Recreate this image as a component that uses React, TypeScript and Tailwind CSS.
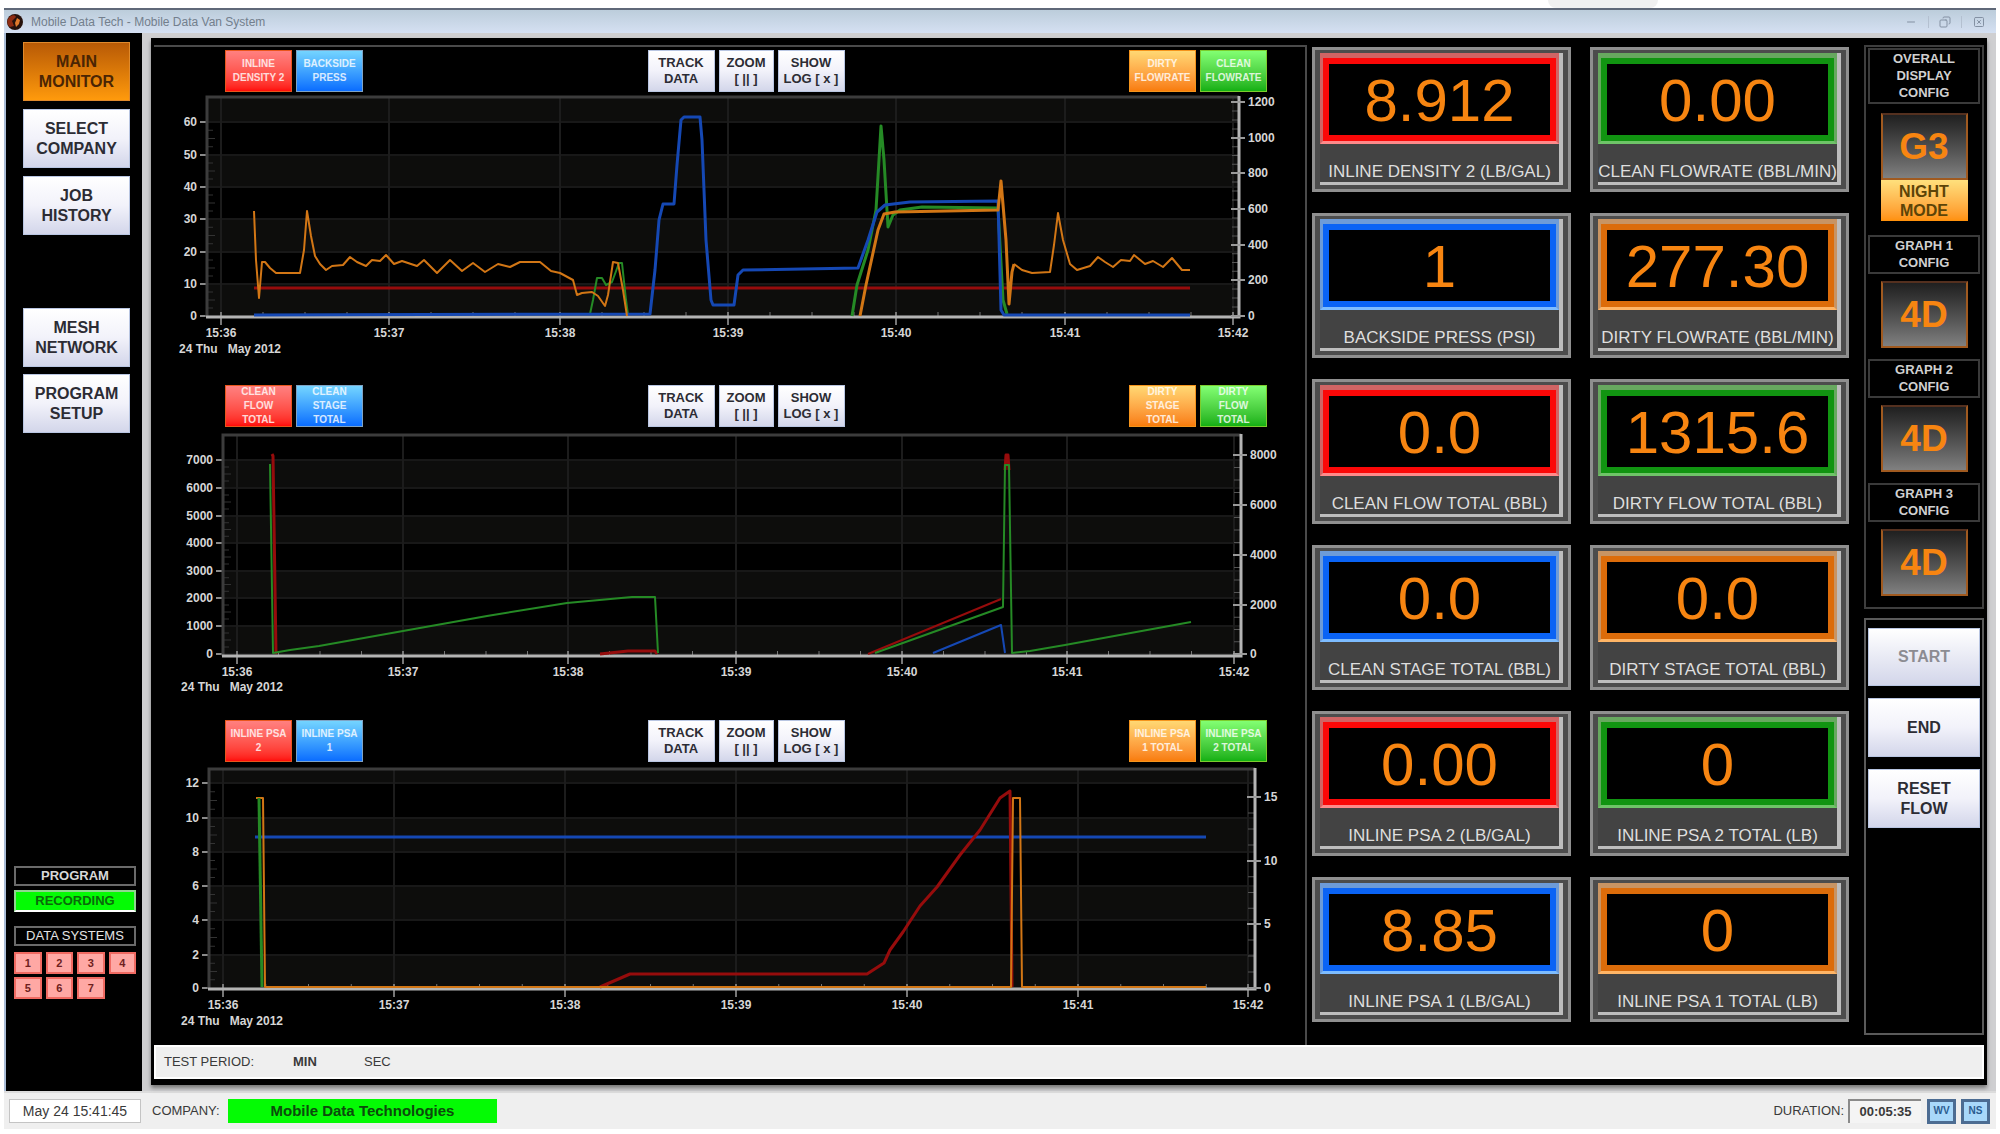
import { Copy, Minus, SquareX } from "lucide-react";

type Color = "red" | "blue" | "green" | "orange";

const lineColor: Record<Color, string> = {
  red: "#960c0c",
  blue: "#1548b4",
  green: "#258a25",
  orange: "#d27615",
};

const legendColor: Record<Color, string> = {
  red: "from-[#ff8080] to-[#ff0808] border-[#e8561c]",
  blue: "from-[#74d4ff] to-[#0a6cff] border-[#7fa3c4]",
  orange: "from-[#ffd873] to-[#f87c08] border-[#f5941c]",
  green: "from-[#82ff72] to-[#12b012] border-[#7ccc2e]",
};

const frameTint: Record<Color, string> = {
  red: "border-[#d06464] border-b-[#ff8a8a]",
  blue: "border-[#6d9bd8] border-b-[#7dbcff]",
  orange: "border-[#c89463] border-b-[#ffb566]",
  green: "border-[#67a85f] border-b-[#6fc468]",
};

const frameColor: Record<Color, string> = {
  red: "border-[#fb0808]",
  blue: "border-[#0a63f5]",
  orange: "border-[#dc6c0a]",
  green: "border-[#119411]",
};

type Tick = [string, number];

type ChartData = {
  top: number;
  plot: { x1: number; x2: number; y1: number; y2: number };
  left: Tick[];
  right: Tick[];
  time: number[];
  bands: [number, number][];
  date: [number, number];
  legend: [string, Color][];
  series: { color: Color; width: number; points: string }[];
};

const charts: ChartData[] = [
  {
    top: 92,
    plot: { x1: 207, x2: 1239, y1: 97, y2: 317 },
    left: [["60", 122], ["50", 155], ["40", 187], ["30", 219], ["20", 252], ["10", 284], ["0", 316]],
    right: [["1200", 102], ["1000", 138], ["800", 173], ["600", 209], ["400", 245], ["200", 280], ["0", 316]],
    time: [221, 389, 560, 728, 896, 1065, 1233],
    bands: [[97, 122], [155, 187], [219, 252], [284, 316]],
    date: [179, 349],
    legend: [["INLINE\nDENSITY 2", "red"], ["BACKSIDE\nPRESS", "blue"], ["DIRTY\nFLOWRATE", "orange"], ["CLEAN\nFLOWRATE", "green"]],
    series: [
      { color: "red", width: 3, points: "254,288 1190,288" },
      {
        color: "green",
        width: 2,
        points: "590,314 593,300 597,278 602,278 606,285 612,282 619,263 622,263 626,300 628,315",
      },
      {
        color: "green",
        width: 3,
        points:
          "852,316 857,285 868,250 876,210 881,126 884,160 888,227 893,215 900,210 922,207 998,208 1003,300 1007,314",
      },
      {
        color: "blue",
        width: 3,
        points:
          "254,315 650,314 655,270 659,220 663,204 674,204 677,165 681,120 684,117 700,117 702,140 706,240 711,300 713,305 734,305 738,275 743,270 858,268 868,240 877,212 885,205 910,202 998,201 1001,310 1004,315 1190,315",
      },
      {
        color: "orange",
        width: 2,
        points:
          "254,211 256,260 259,298 262,262 265,262 270,268 276,273 300,273 304,250 307,211 311,236 315,256 320,264 326,270 332,266 343,265 350,257 357,262 366,266 372,260 380,261 386,255 394,264 402,261 417,266 424,260 437,273 450,260 462,271 473,263 485,272 498,264 510,267 520,262 540,262 551,271 560,273 573,280 577,295 582,293 592,292 598,296 605,306 608,295 613,262 618,263 623,290 627,316",
      },
      {
        color: "orange",
        width: 3,
        points:
          "860,316 866,285 878,230 884,214 895,212 998,210 1001,181 1006,240 1009,304 1012,272 1014,264",
      },
      {
        color: "orange",
        width: 2,
        points:
          "1014,264 1022,270 1032,273 1050,272 1054,245 1058,213 1063,240 1070,264 1077,270 1090,266 1098,257 1105,262 1113,267 1121,260 1130,261 1134,255 1145,264 1153,261 1163,267 1172,258 1182,270 1190,270",
      },
    ],
  },
  {
    top: 427,
    plot: { x1: 223, x2: 1241, y1: 435, y2: 656 },
    left: [["7000", 460], ["6000", 488], ["5000", 516], ["4000", 543], ["3000", 571], ["2000", 598], ["1000", 626], ["0", 654]],
    right: [["8000", 455], ["6000", 505], ["4000", 555], ["2000", 605], ["0", 654]],
    time: [237, 403, 568, 736, 902, 1067, 1234],
    bands: [[460, 488], [516, 543], [571, 598], [626, 654]],
    date: [181, 687],
    legend: [["CLEAN\nFLOW\nTOTAL", "red"], ["CLEAN\nSTAGE\nTOTAL", "blue"], ["DIRTY\nSTAGE\nTOTAL", "orange"], ["DIRTY\nFLOW\nTOTAL", "green"]],
    series: [
      { color: "red", width: 3, points: "272,454 273,456 276,654" },
      { color: "red", width: 3, points: "600,654 628,651 655,651 657,654" },
      { color: "red", width: 2, points: "868,654 1001,599" },
      { color: "red", width: 3, points: "1005,470 1006,455 1008,455 1009,470" },
      { color: "blue", width: 2, points: "933,653 1001,625 1005,653" },
      { color: "green", width: 2, points: "270,464 273,653 290,650 319,646 403,631 487,616 567,603 632,597 655,597 658,653" },
      { color: "green", width: 2, points: "875,653 1003,607 1005,465 1009,465 1012,653 1030,651 1065,645 1191,622" },
    ],
  },
  {
    top: 762,
    plot: { x1: 209, x2: 1255, y1: 769, y2: 989 },
    left: [["12", 783], ["10", 818], ["8", 852], ["6", 886], ["4", 920], ["2", 955], ["0", 988]],
    right: [["15", 797], ["10", 861], ["5", 924], ["0", 988]],
    time: [223, 394, 565, 736, 907, 1078, 1248],
    bands: [[769, 783], [818, 852], [886, 920], [955, 988]],
    date: [181, 1021],
    legend: [["INLINE PSA\n2", "red"], ["INLINE PSA\n1", "blue"], ["INLINE PSA\n1 TOTAL", "orange"], ["INLINE PSA\n2 TOTAL", "green"]],
    series: [
      { color: "blue", width: 3, points: "255,837 1206,837" },
      {
        color: "red",
        width: 3,
        points:
          "600,987 630,974 867,974 884,963 890,950 903,932 920,906 937,887 960,855 980,830 1000,798 1010,791 1012,987",
      },
      { color: "orange", width: 2, points: "256,798 263,798 265,987 1011,987 1013,798 1020,798 1022,987 1206,987" },
      { color: "green", width: 3, points: "259,798 262,987" },
    ],
  },
];

const gauges: { label: string; value: string; color: Color }[] = [
  { label: "INLINE DENSITY 2 (LB/GAL)", value: "8.912", color: "red" },
  { label: "CLEAN FLOWRATE (BBL/MIN)", value: "0.00", color: "green" },
  { label: "BACKSIDE PRESS (PSI)", value: "1", color: "blue" },
  { label: "DIRTY FLOWRATE (BBL/MIN)", value: "277.30", color: "orange" },
  { label: "CLEAN FLOW TOTAL (BBL)", value: "0.0", color: "red" },
  { label: "DIRTY FLOW TOTAL (BBL)", value: "1315.6", color: "green" },
  { label: "CLEAN STAGE TOTAL (BBL)", value: "0.0", color: "blue" },
  { label: "DIRTY STAGE TOTAL (BBL)", value: "0.0", color: "orange" },
  { label: "INLINE PSA 2 (LB/GAL)", value: "0.00", color: "red" },
  { label: "INLINE PSA 2 TOTAL (LB)", value: "0", color: "green" },
  { label: "INLINE PSA 1 (LB/GAL)", value: "8.85", color: "blue" },
  { label: "INLINE PSA 1 TOTAL (LB)", value: "0", color: "orange" },
];

const silver = "bg-gradient-to-b from-white via-[#f2f2fa] to-[#d3d6ea] border border-[#b9c6e2] font-bold text-[#2c2c34]";

function LegendButton({ label, color }: { label: string; color: Color }) {
  return (
    <button
      className={`flex h-[42px] w-[67px] items-center justify-center overflow-hidden whitespace-pre border bg-gradient-to-b text-center text-[10px] font-bold leading-[14px] text-white/80 ${legendColor[color]}`}
    >
      {label}
    </button>
  );
}

function Chart({ data }: { data: ChartData }) {
  const { x1, x2, y1, y2 } = data.plot;
  const step = (data.time[1] - data.time[0]) / 4;
  const minor = data.time.slice(0, 6).flatMap((t) => [t + step, t + step * 2, t + step * 3]);

  return (
    <svg viewBox={`154 ${data.top} 1151 278`} className="block h-auto w-full text-[12px] font-bold" fill="#d6d6d6">
      {data.bands.map(([a, b]) => (
        <rect key={a} x={x1} y={a} width={x2 - x1} height={b - a} fill="#0d0d0c" />
      ))}
      {data.left.map(([label, y]) => (
        <g key={label}>
          <path d={`M${x1} ${y}H${x2}`} stroke="#181818" strokeWidth="2" />
          <path d={`M${x1 - 7} ${y}h7`} stroke="#8a8a8a" strokeWidth="2" />
          <text x={x1 - 10} y={y + 4} textAnchor="end">
            {label}
          </text>
        </g>
      ))}
      {data.time.map((x, i) => (
        <g key={x}>
          <path d={`M${x} ${y1}V${y2}`} stroke="#1c1c1c" strokeWidth="2" />
          <path d={`M${x} ${y2 - 5}v13`} stroke="#777" strokeWidth="2" />
          <text x={x} y={y2 + 20} textAnchor="middle">
            {`15:${36 + i}`}
          </text>
        </g>
      ))}
      {minor.map((x) => (
        <path key={x} d={`M${x} ${y2 - 5}v5`} stroke="#777" strokeWidth="1" />
      ))}
      {data.left.slice(1).map(([label, y], i) => {
        const gap = (y - data.left[i][1]) / 4;
        return <path key={label} d={`M${x1} ${y - gap}h6M${x1} ${y - gap * 2}h8M${x1} ${y - gap * 3}h6`} stroke="#333" />;
      })}
      {data.right.slice(1).map(([label, y], i) => {
        const gap = (y - data.right[i][1]) / 4;
        return <path key={label} d={`M${x2 - 7} ${y - gap}h6M${x2 - 7} ${y - gap * 2}h6M${x2 - 7} ${y - gap * 3}h6`} stroke="#555" />;
      })}
      <path d={`M${x1} ${y2}V${y1}H${x2}`} fill="none" stroke="#3c3c3c" strokeWidth="3" />
      <path d={`M${x1 - 1} ${y2}H${x2}V${y1 - 1}`} fill="none" stroke="#b4b4b4" strokeWidth="3" />
      {data.right.map(([label, y]) => (
        <g key={label}>
          <path d={`M${x2 - 8} ${y}h14`} stroke="#9a9a9a" strokeWidth="2" />
          <text x={x2 + 9} y={y + 4}>
            {label}
          </text>
        </g>
      ))}
      {data.series.map((s) => (
        <polyline
          key={s.points}
          points={s.points}
          fill="none"
          stroke={lineColor[s.color]}
          strokeWidth={s.width}
          strokeLinejoin="round"
        />
      ))}
      <text x={data.date[0]} y={data.date[1] + 4} xmlSpace="preserve">
        {"24 Thu   May 2012"}
      </text>
    </svg>
  );
}

function ChartSection({ data }: { data: ChartData }) {
  return (
    <section>
      <div className="flex justify-between pl-[71px] pr-[38px]">
        <div className="flex gap-[4px]">
          {data.legend.slice(0, 2).map(([label, color]) => (
            <LegendButton key={label} label={label} color={color} />
          ))}
        </div>
        <div className="flex gap-[4px] text-[13px] leading-[16px]">
          <button className={`w-[67px] ${silver}`}>
            TRACK
            <br />
            DATA
          </button>
          <button className={`w-[55px] ${silver}`}>
            ZOOM
            <br />[ || ]
          </button>
          <button className={`w-[67px] whitespace-nowrap ${silver}`}>
            SHOW
            <br />
            LOG [ x ]
          </button>
        </div>
        <div className="flex gap-[4px]">
          {data.legend.slice(2).map(([label, color]) => (
            <LegendButton key={label} label={label} color={color} />
          ))}
        </div>
      </div>
      <Chart data={data} />
    </section>
  );
}

function Gauge({ label, value, color }: { label: string; value: string; color: Color }) {
  return (
    <div className="border-[3px] border-[#8f8f8f] bg-[#4c4c4c] px-[5px] pb-[4px] pt-[3px]">
      <div className="border-b-[3px] border-r-[4px] border-[#bdbdbd] bg-[#434343]">
        <div className={`border-x-[3px] border-b-[3px] border-t-[5px] ${frameTint[color]}`}>
          <div
            className={`flex h-[83px] items-center justify-center border-[6px] bg-black pt-[2px] text-[60px] leading-none text-[#f78511] ${frameColor[color]}`}
          >
            {value}
          </div>
        </div>
        <div className="flex h-[38px] items-end justify-center whitespace-nowrap text-[17px] leading-[20px] text-[#dedede]">
          {label}
        </div>
      </div>
    </div>
  );
}

function ConfigHeading({ lines }: { lines: string[] }) {
  return (
    <h2 className="w-full border-2 border-[#3a3a3a] pb-[1px] text-center text-[13px] font-bold leading-[17px] text-[#d0d0d0]">
      {lines.map((line) => (
        <span key={line} className="block">
          {line}
        </span>
      ))}
    </h2>
  );
}

function ConfigButton({ label }: { label: string }) {
  return (
    <button className="block h-[67px] w-[87px] border-2 border-[#a05a20] border-t-[#54301f] bg-gradient-to-b from-[#202020] to-[#808080] text-[37px] font-bold leading-none text-[#f78511]">
      {label}
    </button>
  );
}

function SideButton({ children, active }: { children: React.ReactNode; active?: boolean }) {
  return (
    <button
      className={`h-[59px] w-full text-[16px] leading-[20px] ${
        active
          ? "border border-[#e08a2c] bg-gradient-to-b from-[#b85a06] to-[#ff9a0c] font-bold text-[#4a2504]"
          : silver
      }`}
    >
      {children}
    </button>
  );
}

function Sidebar() {
  return (
    <nav className="flex w-[136px] flex-col bg-black pb-[92px] pt-[9px]">
      <div className="flex flex-col gap-[8px] pl-[17px] pr-[12px]">
        <SideButton active>
          MAIN
          <br />
          MONITOR
        </SideButton>
        <SideButton>
          SELECT
          <br />
          COMPANY
        </SideButton>
        <SideButton>
          JOB
          <br />
          HISTORY
        </SideButton>
      </div>
      <div className="mt-[73px] flex flex-col gap-[7px] pl-[17px] pr-[12px]">
        <SideButton>
          MESH
          <br />
          NETWORK
        </SideButton>
        <SideButton>
          PROGRAM
          <br />
          SETUP
        </SideButton>
      </div>
      <div className="mt-auto pl-[8px] pr-[6px] text-center text-[13px] leading-[18px]">
        <h2 className="border-2 border-[#6a6a6a] font-bold leading-[16px] text-[#d8d8d8]">PROGRAM</h2>
        <p className="mt-[4px] border-2 border-[#8fd68f] border-b-white bg-[#04fb04] font-bold text-[#0a6a0a]">RECORDING</p>
        <h2 className="mt-[14px] border-2 border-[#6a6a6a] leading-[16px] text-[#e4e4e4]">DATA SYSTEMS</h2>
        <div className="mt-[6px] grid grid-cols-4 gap-x-[4px] gap-y-[3px]">
          {[1, 2, 3, 4, 5, 6, 7].map((n) => (
            <button key={n} className="h-[22px] border-2 border-[#f06a62] bg-[#ffa8a4] text-[11px] font-bold leading-none text-[#6e2020]">
              {n}
            </button>
          ))}
        </div>
      </div>
    </nav>
  );
}

function TitleBar() {
  return (
    <header className="flex h-[25px] items-center border-t-2 border-[#5f6878] bg-gradient-to-b from-[#bccddb] to-[#d5e0f2] pl-[2px]">
      <svg viewBox="0 0 18 18" className="h-[18px] w-[18px]">
        <circle cx="9" cy="9" r="8" fill="#26120c" />
        <path d="M2 6C4 2 9 1 10 4L6 8L8 13L4 14C1 12 1 8 2 6Z" fill="#8e2c12" />
        <path d="M11 5L14 7L13 11L10 14L9 10Z" fill="#e07a2c" />
      </svg>
      <h1 className="ml-[7px] text-[12px] leading-[16px] text-[#737f8d]">Mobile Data Tech - Mobile Data Van System</h1>
      <div className="ml-auto flex items-center text-[#8491a3]">
        <button aria-label="Minimize" className="flex w-[34px] justify-center">
          <Minus size={12} />
        </button>
        <button aria-label="Restore" className="flex w-[34px] justify-center border-x border-[#b4c0d0]">
          <Copy size={12} className="-scale-x-100" />
        </button>
        <button aria-label="Close" className="flex w-[34px] justify-center">
          <SquareX size={12} />
        </button>
      </div>
    </header>
  );
}

function StatusBar() {
  return (
    <footer className="flex h-[38px] items-center border-t-2 border-[#dcdcdc] bg-[#efefef] pl-[5px] pr-[6px] text-[13px] leading-[16px] text-[#3a3a3a]">
      <div className="w-[132px] border border-[#c4c4c4] bg-white py-[3px] text-center text-[14px]">May 24 15:41:45</div>
      <span className="ml-[11px] w-[76px]">COMPANY:</span>
      <div className="w-[269px] bg-[#04fb04] py-[4px] text-center text-[15px] font-bold text-[#0c4a0c]">
        Mobile Data Technologies
      </div>
      <span className="ml-auto">DURATION:</span>
      <div className="ml-[4px] w-[73px] border-l-2 border-t-2 border-[#8a8a8a] bg-[#f4f4f4] py-[3px] text-center font-bold">
        00:05:35
      </div>
      <button className="ml-[6px] h-[25px] w-[29px] border-[3px] border-[#4c6c92] bg-[#a8d8fa] text-[10px] font-bold text-[#2a5c90]">WV</button>
      <button className="ml-[5px] h-[25px] w-[29px] border-[3px] border-[#4c6c92] bg-[#a8d8fa] text-[10px] font-bold text-[#2a5c90]">NS</button>
    </footer>
  );
}

export default function App() {
  return (
    <div className="min-h-screen bg-white px-[4px] pb-[7px] font-['Liberation_Sans',Arial,sans-serif]">
      <div className="flex h-[8px] justify-end pr-[338px]">
        <div className="w-[110px] rounded-b-full bg-[#f0f0f0]" />
      </div>
      <TitleBar />
      <div className="flex border-l-2 border-[#a9bcd6] bg-[#cfcfd1]">
        <Sidebar />
        <main className="mb-[6px] ml-[9px] mr-[9px] mt-[5px] min-w-0 flex-1 bg-black px-[3px] pb-[6px] pt-[7px] shadow-[0_3px_4px_#777]">
          <div className="flex">
            <div className="flex min-w-0 flex-1 flex-col gap-[15px] border-r-2 border-t-2 border-[#4a4a4a] pb-[5px] pt-[3px]">
              {charts.map((c) => (
                <ChartSection key={c.top} data={c} />
              ))}
            </div>
            <div className="ml-[5px] mt-[2px] grid w-[537px] grid-cols-2 content-start gap-x-[19px] gap-y-[21px]">
              {gauges.map((g) => (
                <Gauge key={g.label} {...g} />
              ))}
            </div>
            <aside className="mb-[10px] ml-[15px] flex w-[120px] flex-col gap-[9px]">
              <div className="flex flex-col items-center border-2 border-[#3e3e3e] px-[2px] pb-[11px] pt-[1px]">
                <ConfigHeading lines={["OVERALL", "DISPLAY", "CONFIG"]} />
                <div className="mb-[14px] mt-[9px] flex flex-col">
                  <ConfigButton label="G3" />
                  <button className="h-[41px] w-[87px] bg-gradient-to-b from-[#ffe07c] to-[#ff9008] text-[16px] font-bold leading-[19px] text-[#5c4408]">
                    NIGHT
                    <br />
                    MODE
                  </button>
                </div>
                <ConfigHeading lines={["GRAPH 1", "CONFIG"]} />
                <div className="mb-[11px] mt-[7px]">
                  <ConfigButton label="4D" />
                </div>
                <ConfigHeading lines={["GRAPH 2", "CONFIG"]} />
                <div className="mb-[11px] mt-[7px]">
                  <ConfigButton label="4D" />
                </div>
                <ConfigHeading lines={["GRAPH 3", "CONFIG"]} />
                <div className="mt-[7px]">
                  <ConfigButton label="4D" />
                </div>
              </div>
              <div className="flex flex-1 flex-col gap-[12px] border-2 border-[#5a5a5a] px-[2px] pt-[8px]">
                <button disabled className="h-[58px] border border-[#b9c6e2] bg-gradient-to-b from-white to-[#d3d6ea] text-[16px] font-bold text-[#8c8c92]">
                  START
                </button>
                <SideButton>END</SideButton>
                <SideButton>
                  RESET
                  <br />
                  FLOW
                </SideButton>
              </div>
            </aside>
          </div>
          <div className="flex h-[34px] items-center border-2 border-white bg-[#efefef] pl-[8px] text-[13px] text-[#3a3a3a]">
            <span className="w-[129px]">TEST PERIOD:</span>
            <span className="w-[71px] font-bold">MIN</span>
            <span>SEC</span>
          </div>
        </main>
      </div>
      <StatusBar />
    </div>
  );
}
